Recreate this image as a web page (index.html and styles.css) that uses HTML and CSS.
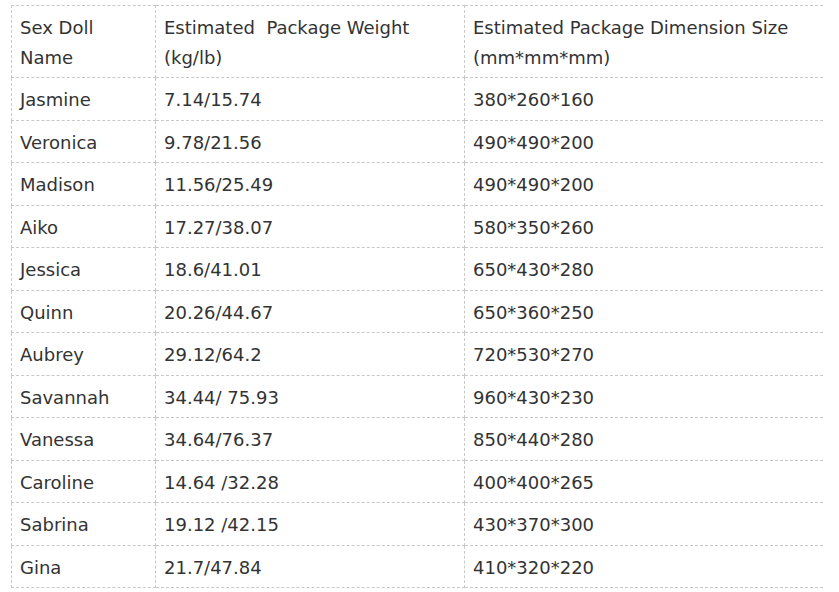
FILE: index.html
```html
<!DOCTYPE html>
<html>
<head>
<meta charset="utf-8">
<link rel="stylesheet" href="styles.css">
</head>
<body>
<table class="spec">
<colgroup><col class="c1"><col class="c2"><col class="c3"></colgroup>
<tr class="head"><td>Sex Doll<br>Name</td><td>Estimated&nbsp; Package Weight<br>(kg/lb)</td><td>Estimated Package Dimension Size<br>(mm*mm*mm)</td></tr>
<tr><td>Jasmine</td><td>7.14/15.74</td><td>380*260*160</td></tr>
<tr><td>Veronica</td><td>9.78/21.56</td><td>490*490*200</td></tr>
<tr><td>Madison</td><td>11.56/25.49</td><td>490*490*200</td></tr>
<tr><td>Aiko</td><td>17.27/38.07</td><td>580*350*260</td></tr>
<tr><td>Jessica</td><td>18.6/41.01</td><td>650*430*280</td></tr>
<tr><td>Quinn</td><td>20.26/44.67</td><td>650*360*250</td></tr>
<tr><td>Aubrey</td><td>29.12/64.2</td><td>720*530*270</td></tr>
<tr><td>Savannah</td><td>34.44/ 75.93</td><td>960*430*230</td></tr>
<tr><td>Vanessa</td><td>34.64/76.37</td><td>850*440*280</td></tr>
<tr><td>Caroline</td><td>14.64 /32.28</td><td>400*400*265</td></tr>
<tr><td>Sabrina</td><td>19.12 /42.15</td><td>430*370*300</td></tr>
<tr><td>Gina</td><td>21.7/47.84</td><td>410*320*220</td></tr>
</table>
</body>
</html>
```
FILE: styles.css
```css
html, body {
  margin: 0;
  padding: 0;
  background: #fff;
}
body {
  padding: 5px 0 0 11px;
  font-family: "DejaVu Sans", Verdana, sans-serif;
  font-size: 18px;
  color: #333;
}
.spec {
  border-collapse: collapse;
  table-layout: fixed;
  width: 811px;
}
.c1 { width: 144px; }
.c2 { width: 309px; }
.c3 { width: 358px; }
.spec td {
  border: 1px dashed #c8c8c8;
  padding: 7px 8px 5px;
  line-height: 29.5px;
  vertical-align: top;
  text-align: left;
  white-space: nowrap;
}
.spec td:last-child {
  border-right: none;
}
```
